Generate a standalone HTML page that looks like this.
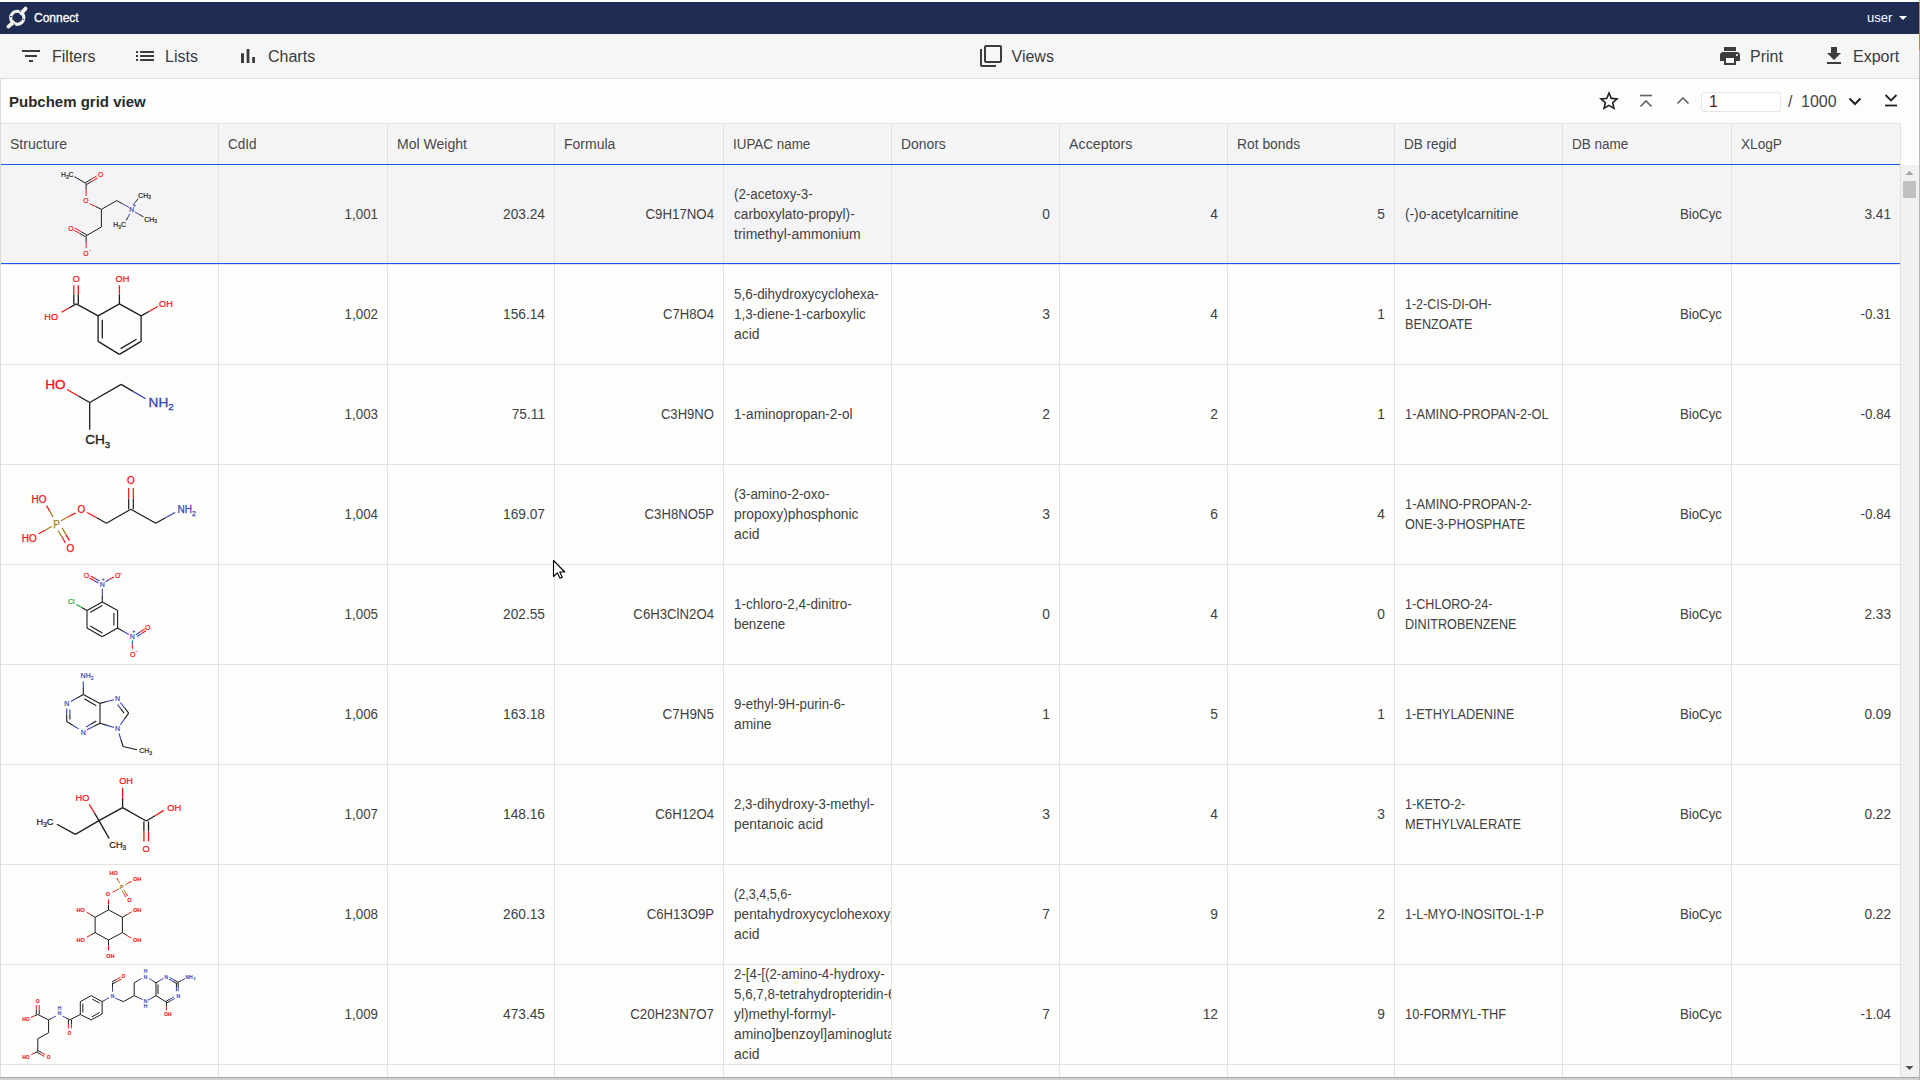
<!DOCTYPE html><html><head><meta charset="utf-8"><style>
*{box-sizing:border-box}
html,body{margin:0;padding:0;width:1920px;height:1080px;overflow:hidden;background:#fdfdfc;font-family:"Liberation Sans",sans-serif;color:#3d3d3d}
.a{position:absolute}
#nav{left:0;top:2px;width:1919px;height:32px;background:#202d53}
#tb{left:0;top:34px;width:1919px;height:45px;background:#f6f6f6;border-bottom:1px solid #dedede}
.tbt{font-size:16px;color:#3b3b3b;line-height:20px;top:47px}
#title{left:9px;top:92px;font-size:15px;font-weight:bold;color:#2b2b2b;line-height:20px}
#hdr{left:0;top:123px;width:1900px;height:42px;background:#f5f5f6;border-top:1px solid #e2e2e2}
.hc{font-size:14px;color:#474747;line-height:20px;top:134px}
.vl{width:1px;background:#e1e1e3}
.hl{height:1px;background:#e3e3e3}
.cell{font-size:14px;color:#414141;line-height:20px;white-space:nowrap;overflow:hidden}
.r{text-align:right}
</style></head><body>
<div class="a" id="nav"></div>
<svg class="a" style="left:0px;top:0px" width="34" height="34" viewBox="0 0 34 34"><circle cx="17.3" cy="17.8" r="6.6" fill="none" stroke="#f3f1ee" stroke-width="3.1"/><path d="M21.3 13.2 L25.6 8.6" stroke="#f3f1ee" stroke-width="3.8" stroke-linecap="round"/><path d="M13.2 22.4 L8.4 26.6" stroke="#f3f1ee" stroke-width="3.8" stroke-linecap="round"/><path d="M19.6 10.2 L20.6 12.0 M24.4 19.6 L22.4 19.0 M15.2 25.6 L14.0 23.6 M10.0 16.4 L12.2 16.8" stroke="#202d53" stroke-width="0.9"/></svg>
<div class="a" style="left:34px;top:11px;font-size:12px;color:#fff;line-height:14px;-webkit-text-stroke:0.3px #fff">Connect</div>
<div class="a" style="left:1867px;top:10px;font-size:13px;color:#fff;line-height:16px">user</div>
<svg class="a" style="left:1898px;top:15px" width="10" height="6"><path d="M1 1h8l-4 4z" fill="#fff"/></svg>
<div class="a" id="tb"></div>
<svg class="a" style="left:19px;top:44px" width="24" height="24" viewBox="0 0 24 24"><path d="M10 18h4v-2h-4v2zM3 6v2h18V6H3zm3 7h12v-2H6v2z" fill="#3c3c3c"/></svg>
<div class="a tbt" style="left:52px">Filters</div>
<svg class="a" style="left:133px;top:44px" width="24" height="24" viewBox="0 0 24 24"><path d="M3 13h2v-2H3v2zm0 4h2v-2H3v2zm0-8h2V7H3v2zm4 4h14v-2H7v2zm0 4h14v-2H7v2zM7 7v2h14V7H7z" fill="#3c3c3c"/></svg>
<div class="a tbt" style="left:165px">Lists</div>
<svg class="a" style="left:236px;top:44px" width="24" height="24" viewBox="0 0 24 24"><path d="M5 9.2h3V19H5zM10.6 5h2.8v14h-2.8zm5.6 8H19v6h-2.8z" fill="#3c3c3c"/></svg>
<div class="a tbt" style="left:268px">Charts</div>
<svg class="a" style="left:979px;top:44px" width="24" height="24" viewBox="0 0 24 24"><path d="M3 5H1v16c0 1.1.9 2 2 2h14v-2H3V5zm18-4H7c-1.1 0-2 .9-2 2v14c0 1.1.9 2 2 2h14c1.1 0 2-.9 2-2V3c0-1.1-.9-2-2-2zm0 16H7V3h14v14z" fill="#3c3c3c"/></svg>
<div class="a tbt" style="left:1011.5px">Views</div>
<svg class="a" style="left:1718px;top:44px" width="24" height="24" viewBox="0 0 24 24"><path d="M19 8H5c-1.66 0-3 1.34-3 3v6h4v4h12v-4h4v-6c0-1.66-1.34-3-3-3zm-3 11H8v-5h8v5zm3-7c-.55 0-1-.45-1-1s.45-1 1-1 1 .45 1 1-.45 1-1 1zm-1-9H6v4h12V3z" fill="#3c3c3c"/></svg>
<div class="a tbt" style="left:1750px">Print</div>
<svg class="a" style="left:1822px;top:44px" width="24" height="24" viewBox="0 0 24 24"><path d="M19 9h-4V3H9v6H5l7 7 7-7zM5 18v2h14v-2H5z" fill="#3c3c3c"/></svg>
<div class="a tbt" style="left:1853px">Export</div>
<div class="a" id="title">Pubchem grid view</div>
<svg class="a" style="left:1597px;top:89px" width="24" height="24" viewBox="0 0 24 24"><path d="M22 9.24l-7.19-.62L12 2 9.19 8.63 2 9.24l5.46 4.73L5.82 21 12 17.27 18.18 21l-1.63-7.03L22 9.24zM12 15.4l-3.76 2.27 1-4.28-3.32-2.88 4.38-.38L12 6.1l1.71 4.04 4.38.38-3.32 2.88 1 4.28L12 15.4z" fill="#222"/></svg>
<svg class="a" style="left:1638px;top:93px" width="16" height="16"><path d="M2 2.5h12" stroke="#666" stroke-width="1.7"/><path d="M2.5 13.5L8 8l5.5 5.5" stroke="#666" stroke-width="1.7" fill="none"/></svg>
<svg class="a" style="left:1675px;top:94px" width="16" height="14"><path d="M2.5 9.5L8 4l5.5 5.5" stroke="#666" stroke-width="1.7" fill="none"/></svg>
<div class="a" style="left:1701px;top:92px;width:80px;height:20px;border:1px solid #e6e6e6;border-radius:3px;background:#fff"></div>
<div class="a" style="left:1709px;top:92px;font-size:16px;line-height:20px;color:#5a1a1a">1</div>
<div class="a" style="left:1788px;top:92px;font-size:16px;line-height:20px;color:#444">/</div>
<div class="a" style="left:1801px;top:92px;font-size:16px;line-height:20px;color:#444">1000</div>
<svg class="a" style="left:1847px;top:94px" width="16" height="14"><path d="M2.5 4.5L8 10l5.5-5.5" stroke="#222" stroke-width="2" fill="none"/></svg>
<svg class="a" style="left:1883px;top:92px" width="16" height="16"><path d="M2 13.5h12" stroke="#222" stroke-width="1.8"/><path d="M2.5 3L8 8.5 13.5 3" stroke="#222" stroke-width="1.8" fill="none"/></svg>
<div class="a" id="hdr"></div>
<div class="a hc" style="left:10px;transform:scaleX(1.0031);transform-origin:left">Structure</div>
<div class="a hc" style="left:228px;transform:scaleX(0.9680);transform-origin:left">CdId</div>
<div class="a hc" style="left:397px;transform:scaleX(1.0036);transform-origin:left">Mol Weight</div>
<div class="a hc" style="left:564px;transform:scaleX(0.9997);transform-origin:left">Formula</div>
<div class="a hc" style="left:733px;transform:scaleX(0.9578);transform-origin:left">IUPAC name</div>
<div class="a hc" style="left:901px;transform:scaleX(0.9910);transform-origin:left">Donors</div>
<div class="a hc" style="left:1069px;transform:scaleX(1.0188);transform-origin:left">Acceptors</div>
<div class="a hc" style="left:1237px;transform:scaleX(0.9898);transform-origin:left">Rot bonds</div>
<div class="a hc" style="left:1404px;transform:scaleX(0.9648);transform-origin:left">DB regid</div>
<div class="a hc" style="left:1572px;transform:scaleX(0.9641);transform-origin:left">DB name</div>
<div class="a hc" style="left:1741px;transform:scaleX(0.9724);transform-origin:left">XLogP</div>
<div class="a" style="left:0;top:165px;width:1900px;height:98px;background:#f4f4f6"></div>
<div class="a vl" style="left:218px;top:124px;height:953px"></div>
<div class="a vl" style="left:387px;top:124px;height:953px"></div>
<div class="a vl" style="left:554px;top:124px;height:953px"></div>
<div class="a vl" style="left:723px;top:124px;height:953px"></div>
<div class="a vl" style="left:891px;top:124px;height:953px"></div>
<div class="a vl" style="left:1059px;top:124px;height:953px"></div>
<div class="a vl" style="left:1227px;top:124px;height:953px"></div>
<div class="a vl" style="left:1394px;top:124px;height:953px"></div>
<div class="a vl" style="left:1562px;top:124px;height:953px"></div>
<div class="a vl" style="left:1731px;top:124px;height:953px"></div>
<div class="a vl" style="left:1900px;top:124px;height:953px"></div>
<div class="a hl" style="left:0;top:264px;width:1900px"></div>
<div class="a hl" style="left:0;top:364px;width:1900px"></div>
<div class="a hl" style="left:0;top:464px;width:1900px"></div>
<div class="a hl" style="left:0;top:564px;width:1900px"></div>
<div class="a hl" style="left:0;top:664px;width:1900px"></div>
<div class="a hl" style="left:0;top:764px;width:1900px"></div>
<div class="a hl" style="left:0;top:864px;width:1900px"></div>
<div class="a hl" style="left:0;top:964px;width:1900px"></div>
<div class="a hl" style="left:0;top:1064px;width:1900px"></div>
<div class="a" style="left:0;top:164px;width:1900px;height:1px;background:#1a5ae6"></div>
<div class="a" style="left:0;top:263px;width:1900px;height:1px;background:#1a5ae6"></div>
<div class="a cell r" style="left:219px;top:204px;width:159px;height:20px"><div style="transform:scaleX(0.9526);transform-origin:right">1,001</div></div>
<div class="a cell r" style="left:388px;top:204px;width:157px;height:20px"><div style="transform:scaleX(0.9798);transform-origin:right">203.24</div></div>
<div class="a cell r" style="left:555px;top:204px;width:159px;height:20px"><div style="transform:scaleX(0.9457);transform-origin:right">C9H17NO4</div></div>
<div class="a cell" style="left:734px;top:184px;width:157px;height:60px"><div style="transform:scaleX(0.9533);transform-origin:left">(2-acetoxy-3-</div><div style="transform:scaleX(0.9755);transform-origin:left">carboxylato-propyl)-</div><div style="transform:scaleX(0.9989);transform-origin:left">trimethyl-ammonium</div></div>
<div class="a cell r" style="left:892px;top:204px;width:158px;height:20px"><div style="transform:scaleX(0.9853);transform-origin:right">0</div></div>
<div class="a cell r" style="left:1060px;top:204px;width:158px;height:20px"><div style="transform:scaleX(0.9853);transform-origin:right">4</div></div>
<div class="a cell r" style="left:1228px;top:204px;width:157px;height:20px"><div style="transform:scaleX(0.9853);transform-origin:right">5</div></div>
<div class="a cell" style="left:1405px;top:204px;width:157px;height:20px"><div style="transform:scaleX(0.9784);transform-origin:left">(-)o-acetylcarnitine</div></div>
<div class="a cell r" style="left:1563px;top:204px;width:159px;height:20px"><div style="transform:scaleX(0.9493);transform-origin:right">BioCyc</div></div>
<div class="a cell r" style="left:1732px;top:204px;width:159px;height:20px"><div style="transform:scaleX(0.9767);transform-origin:right">3.41</div></div>
<div class="a" style="left:0;top:165px;width:218px;height:99px;overflow:hidden"><svg width="218" height="99" style="position:absolute;left:0;top:0" font-family="Liberation Sans, sans-serif"><line x1="74.50" y1="11.60" x2="86.10" y2="18.50" stroke="#1c1c1c" stroke-width="1.0"/><line x1="86.66" y1="19.45" x2="92.21" y2="16.20" stroke="#1c1c1c" stroke-width="1.0"/><line x1="92.21" y1="16.20" x2="97.76" y2="12.95" stroke="#f21414" stroke-width="1.0"/><line x1="85.54" y1="17.55" x2="91.09" y2="14.30" stroke="#1c1c1c" stroke-width="1.0"/><line x1="91.09" y1="14.30" x2="96.64" y2="11.05" stroke="#f21414" stroke-width="1.0"/><line x1="86.10" y1="18.50" x2="86.10" y2="24.75" stroke="#1c1c1c" stroke-width="1.0"/><line x1="86.10" y1="24.75" x2="86.10" y2="31.00" stroke="#f21414" stroke-width="1.0"/><line x1="89.60" y1="38.60" x2="95.50" y2="41.50" stroke="#f21414" stroke-width="1.0"/><line x1="95.50" y1="41.50" x2="101.40" y2="44.40" stroke="#1c1c1c" stroke-width="1.0"/><line x1="101.40" y1="44.40" x2="116.70" y2="35.60" stroke="#1c1c1c" stroke-width="1.0"/><line x1="116.70" y1="35.60" x2="122.85" y2="39.00" stroke="#1c1c1c" stroke-width="1.0"/><line x1="122.85" y1="39.00" x2="129.00" y2="42.40" stroke="#3a44b0" stroke-width="1.0"/><line x1="133.00" y1="40.00" x2="135.60" y2="36.80" stroke="#3a44b0" stroke-width="1.0"/><line x1="135.60" y1="36.80" x2="138.20" y2="33.60" stroke="#1c1c1c" stroke-width="1.0"/><line x1="135.00" y1="47.00" x2="139.25" y2="49.45" stroke="#3a44b0" stroke-width="1.0"/><line x1="139.25" y1="49.45" x2="143.50" y2="51.90" stroke="#1c1c1c" stroke-width="1.0"/><line x1="129.80" y1="48.80" x2="128.00" y2="52.10" stroke="#3a44b0" stroke-width="1.0"/><line x1="128.00" y1="52.10" x2="126.20" y2="55.40" stroke="#1c1c1c" stroke-width="1.0"/><line x1="101.40" y1="44.40" x2="101.40" y2="62.00" stroke="#1c1c1c" stroke-width="1.0"/><line x1="101.40" y1="62.00" x2="86.10" y2="70.80" stroke="#1c1c1c" stroke-width="1.0"/><line x1="86.65" y1="69.84" x2="80.70" y2="66.44" stroke="#1c1c1c" stroke-width="1.0"/><line x1="80.70" y1="66.44" x2="74.75" y2="63.04" stroke="#f21414" stroke-width="1.0"/><line x1="85.55" y1="71.76" x2="79.60" y2="68.36" stroke="#1c1c1c" stroke-width="1.0"/><line x1="79.60" y1="68.36" x2="73.65" y2="64.96" stroke="#f21414" stroke-width="1.0"/><line x1="86.10" y1="70.80" x2="86.10" y2="76.90" stroke="#1c1c1c" stroke-width="1.0"/><line x1="86.10" y1="76.90" x2="86.10" y2="83.00" stroke="#f21414" stroke-width="1.0"/><text x="61.00" y="12.10" font-size="6.8" fill="#1c1c1c" stroke="#1c1c1c" stroke-width="0.20" text-anchor="start">H<tspan font-size="4.76" dy="1.70">3</tspan><tspan dy="-1.70">C</tspan></text><text x="100.60" y="12.00" font-size="6.8" fill="#f21414" stroke="#f21414" stroke-width="0.20" text-anchor="middle">O</text><text x="85.80" y="38.20" font-size="6.8" fill="#f21414" stroke="#f21414" stroke-width="0.20" text-anchor="middle">O</text><text x="131.60" y="47.20" font-size="6.8" fill="#3a44b0" stroke="#3a44b0" stroke-width="0.20" text-anchor="middle">N</text><text x="134.60" y="41.60" font-size="4.5" fill="#3a44b0" stroke="#3a44b0" stroke-width="0.20" text-anchor="middle">+</text><text x="138.30" y="32.60" font-size="6.8" fill="#1c1c1c" stroke="#1c1c1c" stroke-width="0.20" text-anchor="start">CH<tspan font-size="4.76" dy="1.70">3</tspan><tspan dy="-1.70"></tspan></text><text x="144.30" y="56.60" font-size="6.8" fill="#1c1c1c" stroke="#1c1c1c" stroke-width="0.20" text-anchor="start">CH<tspan font-size="4.76" dy="1.70">3</tspan><tspan dy="-1.70"></tspan></text><text x="113.30" y="62.20" font-size="6.8" fill="#1c1c1c" stroke="#1c1c1c" stroke-width="0.20" text-anchor="start">H<tspan font-size="4.76" dy="1.70">3</tspan><tspan dy="-1.70">C</tspan></text><text x="71.00" y="65.60" font-size="6.8" fill="#f21414" stroke="#f21414" stroke-width="0.20" text-anchor="middle">O</text><text x="86.00" y="91.00" font-size="6.8" fill="#f21414" stroke="#f21414" stroke-width="0.20" text-anchor="middle">O</text><text x="90.30" y="86.80" font-size="5" fill="#f21414" stroke="#f21414" stroke-width="0.20" text-anchor="middle">-</text></svg></div>
<div class="a cell r" style="left:219px;top:304px;width:159px;height:20px"><div style="transform:scaleX(0.9526);transform-origin:right">1,002</div></div>
<div class="a cell r" style="left:388px;top:304px;width:157px;height:20px"><div style="transform:scaleX(0.9798);transform-origin:right">156.14</div></div>
<div class="a cell r" style="left:555px;top:304px;width:159px;height:20px"><div style="transform:scaleX(0.9368);transform-origin:right">C7H8O4</div></div>
<div class="a cell" style="left:734px;top:284px;width:157px;height:60px"><div style="transform:scaleX(0.9586);transform-origin:left">5,6-dihydroxycyclohexa-</div><div style="transform:scaleX(0.9563);transform-origin:left">1,3-diene-1-carboxylic</div><div style="transform:scaleX(0.9963);transform-origin:left">acid</div></div>
<div class="a cell r" style="left:892px;top:304px;width:158px;height:20px"><div style="transform:scaleX(0.9853);transform-origin:right">3</div></div>
<div class="a cell r" style="left:1060px;top:304px;width:158px;height:20px"><div style="transform:scaleX(0.9853);transform-origin:right">4</div></div>
<div class="a cell r" style="left:1228px;top:304px;width:157px;height:20px"><div style="transform:scaleX(0.9853);transform-origin:right">1</div></div>
<div class="a cell" style="left:1405px;top:294px;width:157px;height:40px"><div style="transform:scaleX(0.8918);transform-origin:left">1-2-CIS-DI-OH-</div><div style="transform:scaleX(0.9062);transform-origin:left">BENZOATE</div></div>
<div class="a cell r" style="left:1563px;top:304px;width:159px;height:20px"><div style="transform:scaleX(0.9493);transform-origin:right">BioCyc</div></div>
<div class="a cell r" style="left:1732px;top:304px;width:159px;height:20px"><div style="transform:scaleX(0.9522);transform-origin:right">-0.31</div></div>
<div class="a" style="left:0;top:265px;width:218px;height:99px;overflow:hidden"><svg width="218" height="99" style="position:absolute;left:0;top:0" font-family="Liberation Sans, sans-serif"><line x1="98.10" y1="50.90" x2="119.40" y2="38.90" stroke="#1c1c1c" stroke-width="1.3"/><line x1="119.40" y1="38.90" x2="141.10" y2="50.90" stroke="#1c1c1c" stroke-width="1.3"/><line x1="141.10" y1="50.90" x2="141.10" y2="76.40" stroke="#1c1c1c" stroke-width="1.3"/><line x1="141.10" y1="76.40" x2="119.40" y2="89.40" stroke="#1c1c1c" stroke-width="1.3"/><line x1="119.40" y1="89.40" x2="98.10" y2="76.40" stroke="#1c1c1c" stroke-width="1.3"/><line x1="98.10" y1="76.40" x2="98.10" y2="50.90" stroke="#1c1c1c" stroke-width="1.3"/><line x1="102.30" y1="54.80" x2="102.30" y2="73.40" stroke="#1c1c1c" stroke-width="1.3"/><line x1="120.60" y1="83.60" x2="136.60" y2="74.20" stroke="#1c1c1c" stroke-width="1.3"/><line x1="98.10" y1="50.90" x2="76.30" y2="38.90" stroke="#1c1c1c" stroke-width="1.3"/><line x1="73.80" y1="38.90" x2="73.80" y2="29.60" stroke="#1c1c1c" stroke-width="1.3"/><line x1="73.80" y1="29.60" x2="73.80" y2="20.30" stroke="#f21414" stroke-width="1.3"/><line x1="78.30" y1="38.90" x2="78.30" y2="29.60" stroke="#1c1c1c" stroke-width="1.3"/><line x1="78.30" y1="29.60" x2="78.30" y2="20.30" stroke="#f21414" stroke-width="1.3"/><line x1="76.30" y1="38.90" x2="68.90" y2="43.05" stroke="#1c1c1c" stroke-width="1.3"/><line x1="68.90" y1="43.05" x2="61.50" y2="47.20" stroke="#f21414" stroke-width="1.3"/><line x1="119.40" y1="38.90" x2="119.40" y2="29.60" stroke="#1c1c1c" stroke-width="1.3"/><line x1="119.40" y1="29.60" x2="119.40" y2="20.30" stroke="#f21414" stroke-width="1.3"/><line x1="141.10" y1="50.90" x2="149.45" y2="46.20" stroke="#1c1c1c" stroke-width="1.3"/><line x1="149.45" y1="46.20" x2="157.80" y2="41.50" stroke="#f21414" stroke-width="1.3"/><text x="76.30" y="16.80" font-size="9.2" fill="#f21414" stroke="#f21414" stroke-width="0.23" text-anchor="middle">O</text><text x="44.30" y="55.00" font-size="9.2" fill="#f21414" stroke="#f21414" stroke-width="0.23" text-anchor="start">HO</text><text x="115.60" y="16.80" font-size="9.2" fill="#f21414" stroke="#f21414" stroke-width="0.23" text-anchor="start">OH</text><text x="159.00" y="41.90" font-size="9.2" fill="#f21414" stroke="#f21414" stroke-width="0.23" text-anchor="start">OH</text></svg></div>
<div class="a cell r" style="left:219px;top:404px;width:159px;height:20px"><div style="transform:scaleX(0.9526);transform-origin:right">1,003</div></div>
<div class="a cell r" style="left:388px;top:404px;width:157px;height:20px"><div style="transform:scaleX(0.9786);transform-origin:right">75.11</div></div>
<div class="a cell r" style="left:555px;top:404px;width:159px;height:20px"><div style="transform:scaleX(0.9349);transform-origin:right">C3H9NO</div></div>
<div class="a cell" style="left:734px;top:404px;width:157px;height:20px"><div style="transform:scaleX(0.9699);transform-origin:left">1-aminopropan-2-ol</div></div>
<div class="a cell r" style="left:892px;top:404px;width:158px;height:20px"><div style="transform:scaleX(0.9853);transform-origin:right">2</div></div>
<div class="a cell r" style="left:1060px;top:404px;width:158px;height:20px"><div style="transform:scaleX(0.9853);transform-origin:right">2</div></div>
<div class="a cell r" style="left:1228px;top:404px;width:157px;height:20px"><div style="transform:scaleX(0.9853);transform-origin:right">1</div></div>
<div class="a cell" style="left:1405px;top:404px;width:157px;height:20px"><div style="transform:scaleX(0.9151);transform-origin:left">1-AMINO-PROPAN-2-OL</div></div>
<div class="a cell r" style="left:1563px;top:404px;width:159px;height:20px"><div style="transform:scaleX(0.9493);transform-origin:right">BioCyc</div></div>
<div class="a cell r" style="left:1732px;top:404px;width:159px;height:20px"><div style="transform:scaleX(0.9522);transform-origin:right">-0.84</div></div>
<div class="a" style="left:0;top:365px;width:218px;height:99px;overflow:hidden"><svg width="218" height="99" style="position:absolute;left:0;top:0" font-family="Liberation Sans, sans-serif"><line x1="67.00" y1="24.50" x2="78.35" y2="31.00" stroke="#f21414" stroke-width="1.3"/><line x1="78.35" y1="31.00" x2="89.70" y2="37.50" stroke="#1c1c1c" stroke-width="1.3"/><line x1="89.70" y1="37.50" x2="121.20" y2="19.40" stroke="#1c1c1c" stroke-width="1.3"/><line x1="121.20" y1="19.40" x2="133.45" y2="26.60" stroke="#1c1c1c" stroke-width="1.3"/><line x1="133.45" y1="26.60" x2="145.70" y2="33.80" stroke="#3a44b0" stroke-width="1.3"/><line x1="89.70" y1="37.50" x2="89.70" y2="64.80" stroke="#1c1c1c" stroke-width="1.3"/><text x="45.30" y="24.30" font-size="13.6" fill="#f21414" stroke="#f21414" stroke-width="0.34" text-anchor="start">HO</text><text x="148.60" y="41.80" font-size="13.6" fill="#3a44b0" stroke="#3a44b0" stroke-width="0.34" text-anchor="start">NH<tspan font-size="9.52" dy="3.40">2</tspan><tspan dy="-3.40"></tspan></text><text x="85.20" y="79.30" font-size="13.6" fill="#1c1c1c" stroke="#1c1c1c" stroke-width="0.34" text-anchor="start">CH<tspan font-size="9.52" dy="3.40">3</tspan><tspan dy="-3.40"></tspan></text></svg></div>
<div class="a cell r" style="left:219px;top:504px;width:159px;height:20px"><div style="transform:scaleX(0.9526);transform-origin:right">1,004</div></div>
<div class="a cell r" style="left:388px;top:504px;width:157px;height:20px"><div style="transform:scaleX(0.9798);transform-origin:right">169.07</div></div>
<div class="a cell r" style="left:555px;top:504px;width:159px;height:20px"><div style="transform:scaleX(0.9386);transform-origin:right">C3H8NO5P</div></div>
<div class="a cell" style="left:734px;top:484px;width:157px;height:60px"><div style="transform:scaleX(0.9588);transform-origin:left">(3-amino-2-oxo-</div><div style="transform:scaleX(0.9874);transform-origin:left">propoxy)phosphonic</div><div style="transform:scaleX(0.9963);transform-origin:left">acid</div></div>
<div class="a cell r" style="left:892px;top:504px;width:158px;height:20px"><div style="transform:scaleX(0.9853);transform-origin:right">3</div></div>
<div class="a cell r" style="left:1060px;top:504px;width:158px;height:20px"><div style="transform:scaleX(0.9853);transform-origin:right">6</div></div>
<div class="a cell r" style="left:1228px;top:504px;width:157px;height:20px"><div style="transform:scaleX(0.9853);transform-origin:right">4</div></div>
<div class="a cell" style="left:1405px;top:494px;width:157px;height:40px"><div style="transform:scaleX(0.9176);transform-origin:left">1-AMINO-PROPAN-2-</div><div style="transform:scaleX(0.9051);transform-origin:left">ONE-3-PHOSPHATE</div></div>
<div class="a cell r" style="left:1563px;top:504px;width:159px;height:20px"><div style="transform:scaleX(0.9493);transform-origin:right">BioCyc</div></div>
<div class="a cell r" style="left:1732px;top:504px;width:159px;height:20px"><div style="transform:scaleX(0.9522);transform-origin:right">-0.84</div></div>
<div class="a" style="left:0;top:465px;width:218px;height:99px;overflow:hidden"><svg width="218" height="99" style="position:absolute;left:0;top:0" font-family="Liberation Sans, sans-serif"><line x1="53.20" y1="52.10" x2="49.85" y2="46.35" stroke="#a8781c" stroke-width="1.2"/><line x1="49.85" y1="46.35" x2="46.50" y2="40.60" stroke="#f21414" stroke-width="1.2"/><line x1="51.70" y1="61.50" x2="45.15" y2="65.15" stroke="#a8781c" stroke-width="1.2"/><line x1="45.15" y1="65.15" x2="38.60" y2="68.80" stroke="#f21414" stroke-width="1.2"/><line x1="58.21" y1="65.46" x2="61.86" y2="71.71" stroke="#a8781c" stroke-width="1.2"/><line x1="61.86" y1="71.71" x2="65.51" y2="77.96" stroke="#f21414" stroke-width="1.2"/><line x1="62.19" y1="63.14" x2="65.84" y2="69.39" stroke="#a8781c" stroke-width="1.2"/><line x1="65.84" y1="69.39" x2="69.49" y2="75.64" stroke="#f21414" stroke-width="1.2"/><line x1="61.00" y1="55.70" x2="68.30" y2="51.80" stroke="#a8781c" stroke-width="1.2"/><line x1="68.30" y1="51.80" x2="75.60" y2="47.90" stroke="#f21414" stroke-width="1.2"/><line x1="87.10" y1="47.40" x2="96.75" y2="52.85" stroke="#f21414" stroke-width="1.2"/><line x1="96.75" y1="52.85" x2="106.40" y2="58.30" stroke="#1c1c1c" stroke-width="1.2"/><line x1="106.40" y1="58.30" x2="130.80" y2="44.30" stroke="#1c1c1c" stroke-width="1.2"/><line x1="128.70" y1="44.30" x2="128.70" y2="33.60" stroke="#1c1c1c" stroke-width="1.2"/><line x1="128.70" y1="33.60" x2="128.70" y2="22.90" stroke="#f21414" stroke-width="1.2"/><line x1="133.30" y1="44.30" x2="133.30" y2="33.60" stroke="#1c1c1c" stroke-width="1.2"/><line x1="133.30" y1="33.60" x2="133.30" y2="22.90" stroke="#f21414" stroke-width="1.2"/><line x1="130.80" y1="44.30" x2="155.80" y2="58.30" stroke="#1c1c1c" stroke-width="1.2"/><line x1="155.80" y1="58.30" x2="165.45" y2="52.85" stroke="#1c1c1c" stroke-width="1.2"/><line x1="165.45" y1="52.85" x2="175.10" y2="47.40" stroke="#3a44b0" stroke-width="1.2"/><text x="53.20" y="62.60" font-size="10.0" fill="#a8781c" stroke="#a8781c" stroke-width="0.25" text-anchor="start">P</text><text x="31.60" y="37.60" font-size="10.0" fill="#f21414" stroke="#f21414" stroke-width="0.25" text-anchor="start">HO</text><text x="21.80" y="77.20" font-size="10.0" fill="#f21414" stroke="#f21414" stroke-width="0.25" text-anchor="start">HO</text><text x="70.40" y="87.00" font-size="10.0" fill="#f21414" stroke="#f21414" stroke-width="0.25" text-anchor="middle">O</text><text x="81.40" y="48.00" font-size="10.0" fill="#f21414" stroke="#f21414" stroke-width="0.25" text-anchor="middle">O</text><text x="130.80" y="18.80" font-size="10.0" fill="#f21414" stroke="#f21414" stroke-width="0.25" text-anchor="middle">O</text><text x="177.50" y="48.00" font-size="10.0" fill="#3a44b0" stroke="#3a44b0" stroke-width="0.25" text-anchor="start">NH<tspan font-size="7.00" dy="2.50">2</tspan><tspan dy="-2.50"></tspan></text></svg></div>
<div class="a cell r" style="left:219px;top:604px;width:159px;height:20px"><div style="transform:scaleX(0.9526);transform-origin:right">1,005</div></div>
<div class="a cell r" style="left:388px;top:604px;width:157px;height:20px"><div style="transform:scaleX(0.9798);transform-origin:right">202.55</div></div>
<div class="a cell r" style="left:555px;top:604px;width:159px;height:20px"><div style="transform:scaleX(0.9422);transform-origin:right">C6H3ClN2O4</div></div>
<div class="a cell" style="left:734px;top:594px;width:157px;height:40px"><div style="transform:scaleX(0.9637);transform-origin:left">1-chloro-2,4-dinitro-</div><div style="transform:scaleX(0.9537);transform-origin:left">benzene</div></div>
<div class="a cell r" style="left:892px;top:604px;width:158px;height:20px"><div style="transform:scaleX(0.9853);transform-origin:right">0</div></div>
<div class="a cell r" style="left:1060px;top:604px;width:158px;height:20px"><div style="transform:scaleX(0.9853);transform-origin:right">4</div></div>
<div class="a cell r" style="left:1228px;top:604px;width:157px;height:20px"><div style="transform:scaleX(0.9853);transform-origin:right">0</div></div>
<div class="a cell" style="left:1405px;top:594px;width:157px;height:40px"><div style="transform:scaleX(0.8998);transform-origin:left">1-CHLORO-24-</div><div style="transform:scaleX(0.9015);transform-origin:left">DINITROBENZENE</div></div>
<div class="a cell r" style="left:1563px;top:604px;width:159px;height:20px"><div style="transform:scaleX(0.9493);transform-origin:right">BioCyc</div></div>
<div class="a cell r" style="left:1732px;top:604px;width:159px;height:20px"><div style="transform:scaleX(0.9767);transform-origin:right">2.33</div></div>
<div class="a" style="left:0;top:565px;width:218px;height:99px;overflow:hidden"><svg width="218" height="99" style="position:absolute;left:0;top:0" font-family="Liberation Sans, sans-serif"><line x1="102.30" y1="37.00" x2="117.60" y2="45.40" stroke="#1c1c1c" stroke-width="1.1"/><line x1="117.60" y1="45.40" x2="117.60" y2="63.00" stroke="#1c1c1c" stroke-width="1.1"/><line x1="117.60" y1="63.00" x2="102.30" y2="71.80" stroke="#1c1c1c" stroke-width="1.1"/><line x1="102.30" y1="71.80" x2="87.00" y2="63.00" stroke="#1c1c1c" stroke-width="1.1"/><line x1="87.00" y1="63.00" x2="87.00" y2="45.40" stroke="#1c1c1c" stroke-width="1.1"/><line x1="87.00" y1="45.40" x2="102.30" y2="37.00" stroke="#1c1c1c" stroke-width="1.1"/><line x1="90.30" y1="47.20" x2="102.30" y2="40.40" stroke="#1c1c1c" stroke-width="1.1"/><line x1="113.90" y1="48.00" x2="113.90" y2="60.40" stroke="#1c1c1c" stroke-width="1.1"/><line x1="90.30" y1="61.10" x2="102.30" y2="68.00" stroke="#1c1c1c" stroke-width="1.1"/><line x1="87.00" y1="45.40" x2="81.70" y2="42.40" stroke="#1c1c1c" stroke-width="1.1"/><line x1="81.70" y1="42.40" x2="76.40" y2="39.40" stroke="#22a022" stroke-width="1.1"/><line x1="102.30" y1="37.00" x2="102.30" y2="30.40" stroke="#1c1c1c" stroke-width="1.1"/><line x1="102.30" y1="30.40" x2="102.30" y2="23.80" stroke="#3a44b0" stroke-width="1.1"/><line x1="99.53" y1="16.04" x2="95.03" y2="13.54" stroke="#3a44b0" stroke-width="1.1"/><line x1="95.03" y1="13.54" x2="90.53" y2="11.04" stroke="#f21414" stroke-width="1.1"/><line x1="98.47" y1="17.96" x2="93.97" y2="15.46" stroke="#3a44b0" stroke-width="1.1"/><line x1="93.97" y1="15.46" x2="89.47" y2="12.96" stroke="#f21414" stroke-width="1.1"/><line x1="105.60" y1="16.70" x2="109.75" y2="14.35" stroke="#3a44b0" stroke-width="1.1"/><line x1="109.75" y1="14.35" x2="113.90" y2="12.00" stroke="#f21414" stroke-width="1.1"/><line x1="117.60" y1="63.00" x2="123.15" y2="66.20" stroke="#1c1c1c" stroke-width="1.1"/><line x1="123.15" y1="66.20" x2="128.70" y2="69.40" stroke="#3a44b0" stroke-width="1.1"/><line x1="137.21" y1="71.52" x2="141.61" y2="68.62" stroke="#3a44b0" stroke-width="1.1"/><line x1="141.61" y1="68.62" x2="146.01" y2="65.72" stroke="#f21414" stroke-width="1.1"/><line x1="135.99" y1="69.68" x2="140.39" y2="66.78" stroke="#3a44b0" stroke-width="1.1"/><line x1="140.39" y1="66.78" x2="144.79" y2="63.88" stroke="#f21414" stroke-width="1.1"/><line x1="132.40" y1="75.60" x2="132.40" y2="79.70" stroke="#3a44b0" stroke-width="1.1"/><line x1="132.40" y1="79.70" x2="132.40" y2="83.80" stroke="#f21414" stroke-width="1.1"/><text x="68.00" y="39.40" font-size="7.0" fill="#22a022" stroke="#22a022" stroke-width="0.20" text-anchor="start">Cl</text><text x="102.30" y="21.60" font-size="7.0" fill="#3a44b0" stroke="#3a44b0" stroke-width="0.20" text-anchor="middle">N</text><text x="103.40" y="15.60" font-size="4.6" fill="#3a44b0" stroke="#3a44b0" stroke-width="0.20" text-anchor="middle">+</text><text x="86.60" y="13.20" font-size="7.0" fill="#f21414" stroke="#f21414" stroke-width="0.20" text-anchor="middle">O</text><text x="117.80" y="13.20" font-size="7.0" fill="#f21414" stroke="#f21414" stroke-width="0.20" text-anchor="middle">O</text><text x="121.40" y="9.60" font-size="5" fill="#f21414" stroke="#f21414" stroke-width="0.20" text-anchor="middle">-</text><text x="132.30" y="73.90" font-size="7.0" fill="#3a44b0" stroke="#3a44b0" stroke-width="0.20" text-anchor="middle">N</text><text x="133.80" y="67.90" font-size="4.6" fill="#3a44b0" stroke="#3a44b0" stroke-width="0.20" text-anchor="middle">+</text><text x="147.80" y="65.00" font-size="7.0" fill="#f21414" stroke="#f21414" stroke-width="0.20" text-anchor="middle">O</text><text x="132.80" y="92.00" font-size="7.0" fill="#f21414" stroke="#f21414" stroke-width="0.20" text-anchor="middle">O</text><text x="136.60" y="88.40" font-size="5" fill="#f21414" stroke="#f21414" stroke-width="0.20" text-anchor="middle">-</text></svg></div>
<div class="a cell r" style="left:219px;top:704px;width:159px;height:20px"><div style="transform:scaleX(0.9526);transform-origin:right">1,006</div></div>
<div class="a cell r" style="left:388px;top:704px;width:157px;height:20px"><div style="transform:scaleX(0.9798);transform-origin:right">163.18</div></div>
<div class="a cell r" style="left:555px;top:704px;width:159px;height:20px"><div style="transform:scaleX(0.9569);transform-origin:right">C7H9N5</div></div>
<div class="a cell" style="left:734px;top:694px;width:157px;height:40px"><div style="transform:scaleX(0.9473);transform-origin:left">9-ethyl-9H-purin-6-</div><div style="transform:scaleX(0.9832);transform-origin:left">amine</div></div>
<div class="a cell r" style="left:892px;top:704px;width:158px;height:20px"><div style="transform:scaleX(0.9853);transform-origin:right">1</div></div>
<div class="a cell r" style="left:1060px;top:704px;width:158px;height:20px"><div style="transform:scaleX(0.9853);transform-origin:right">5</div></div>
<div class="a cell r" style="left:1228px;top:704px;width:157px;height:20px"><div style="transform:scaleX(0.9853);transform-origin:right">1</div></div>
<div class="a cell" style="left:1405px;top:704px;width:157px;height:20px"><div style="transform:scaleX(0.9115);transform-origin:left">1-ETHYLADENINE</div></div>
<div class="a cell r" style="left:1563px;top:704px;width:159px;height:20px"><div style="transform:scaleX(0.9493);transform-origin:right">BioCyc</div></div>
<div class="a cell r" style="left:1732px;top:704px;width:159px;height:20px"><div style="transform:scaleX(0.9767);transform-origin:right">0.09</div></div>
<div class="a" style="left:0;top:665px;width:218px;height:99px;overflow:hidden"><svg width="218" height="99" style="position:absolute;left:0;top:0" font-family="Liberation Sans, sans-serif"><line x1="83.30" y1="29.60" x2="83.30" y2="22.90" stroke="#1c1c1c" stroke-width="1.1"/><line x1="83.30" y1="22.90" x2="83.30" y2="16.20" stroke="#3a44b0" stroke-width="1.1"/><line x1="83.30" y1="29.60" x2="77.05" y2="33.10" stroke="#1c1c1c" stroke-width="1.1"/><line x1="77.05" y1="33.10" x2="70.80" y2="36.60" stroke="#3a44b0" stroke-width="1.1"/><line x1="66.70" y1="43.50" x2="66.70" y2="50.00" stroke="#3a44b0" stroke-width="1.1"/><line x1="66.70" y1="50.00" x2="66.70" y2="56.50" stroke="#1c1c1c" stroke-width="1.1"/><line x1="69.90" y1="44.40" x2="69.90" y2="49.50" stroke="#3a44b0" stroke-width="1.1"/><line x1="69.90" y1="49.50" x2="69.90" y2="54.60" stroke="#1c1c1c" stroke-width="1.1"/><line x1="66.70" y1="56.50" x2="72.70" y2="60.20" stroke="#1c1c1c" stroke-width="1.1"/><line x1="72.70" y1="60.20" x2="78.70" y2="63.90" stroke="#3a44b0" stroke-width="1.1"/><line x1="87.00" y1="64.80" x2="93.50" y2="61.55" stroke="#3a44b0" stroke-width="1.1"/><line x1="93.50" y1="61.55" x2="100.00" y2="58.30" stroke="#1c1c1c" stroke-width="1.1"/><line x1="86.10" y1="62.00" x2="91.20" y2="59.00" stroke="#3a44b0" stroke-width="1.1"/><line x1="91.20" y1="59.00" x2="96.30" y2="56.00" stroke="#1c1c1c" stroke-width="1.1"/><line x1="100.00" y1="58.30" x2="100.00" y2="38.40" stroke="#1c1c1c" stroke-width="1.1"/><line x1="100.00" y1="38.40" x2="83.30" y2="29.60" stroke="#1c1c1c" stroke-width="1.1"/><line x1="96.30" y1="40.70" x2="84.30" y2="33.80" stroke="#1c1c1c" stroke-width="1.1"/><line x1="100.00" y1="38.40" x2="106.95" y2="36.55" stroke="#1c1c1c" stroke-width="1.1"/><line x1="106.95" y1="36.55" x2="113.90" y2="34.70" stroke="#3a44b0" stroke-width="1.1"/><line x1="120.40" y1="37.50" x2="124.55" y2="42.80" stroke="#3a44b0" stroke-width="1.1"/><line x1="124.55" y1="42.80" x2="128.70" y2="48.10" stroke="#1c1c1c" stroke-width="1.1"/><line x1="117.60" y1="39.60" x2="120.80" y2="43.85" stroke="#3a44b0" stroke-width="1.1"/><line x1="120.80" y1="43.85" x2="124.00" y2="48.10" stroke="#1c1c1c" stroke-width="1.1"/><line x1="128.70" y1="48.10" x2="124.55" y2="53.90" stroke="#1c1c1c" stroke-width="1.1"/><line x1="124.55" y1="53.90" x2="120.40" y2="59.70" stroke="#3a44b0" stroke-width="1.1"/><line x1="100.00" y1="58.30" x2="106.95" y2="60.40" stroke="#1c1c1c" stroke-width="1.1"/><line x1="106.95" y1="60.40" x2="113.90" y2="62.50" stroke="#3a44b0" stroke-width="1.1"/><line x1="119.00" y1="68.50" x2="121.05" y2="75.00" stroke="#3a44b0" stroke-width="1.1"/><line x1="121.05" y1="75.00" x2="123.10" y2="81.50" stroke="#1c1c1c" stroke-width="1.1"/><line x1="123.10" y1="81.50" x2="137.00" y2="84.70" stroke="#1c1c1c" stroke-width="1.1"/><text x="80.60" y="13.20" font-size="7.0" fill="#3a44b0" stroke="#3a44b0" stroke-width="0.20" text-anchor="start">NH<tspan font-size="4.90" dy="1.75">2</tspan><tspan dy="-1.75"></tspan></text><text x="66.70" y="41.00" font-size="7.0" fill="#3a44b0" stroke="#3a44b0" stroke-width="0.20" text-anchor="middle">N</text><text x="83.30" y="70.20" font-size="7.0" fill="#3a44b0" stroke="#3a44b0" stroke-width="0.20" text-anchor="middle">N</text><text x="117.60" y="36.40" font-size="7.0" fill="#3a44b0" stroke="#3a44b0" stroke-width="0.20" text-anchor="middle">N</text><text x="117.60" y="66.00" font-size="7.0" fill="#3a44b0" stroke="#3a44b0" stroke-width="0.20" text-anchor="middle">N</text><text x="139.20" y="88.20" font-size="7.0" fill="#1c1c1c" stroke="#1c1c1c" stroke-width="0.20" text-anchor="start">CH<tspan font-size="4.90" dy="1.75">3</tspan><tspan dy="-1.75"></tspan></text></svg></div>
<div class="a cell r" style="left:219px;top:804px;width:159px;height:20px"><div style="transform:scaleX(0.9526);transform-origin:right">1,007</div></div>
<div class="a cell r" style="left:388px;top:804px;width:157px;height:20px"><div style="transform:scaleX(0.9798);transform-origin:right">148.16</div></div>
<div class="a cell r" style="left:555px;top:804px;width:159px;height:20px"><div style="transform:scaleX(0.9429);transform-origin:right">C6H12O4</div></div>
<div class="a cell" style="left:734px;top:794px;width:157px;height:40px"><div style="transform:scaleX(0.9527);transform-origin:left">2,3-dihydroxy-3-methyl-</div><div style="transform:scaleX(0.9867);transform-origin:left">pentanoic acid</div></div>
<div class="a cell r" style="left:892px;top:804px;width:158px;height:20px"><div style="transform:scaleX(0.9853);transform-origin:right">3</div></div>
<div class="a cell r" style="left:1060px;top:804px;width:158px;height:20px"><div style="transform:scaleX(0.9853);transform-origin:right">4</div></div>
<div class="a cell r" style="left:1228px;top:804px;width:157px;height:20px"><div style="transform:scaleX(0.9853);transform-origin:right">3</div></div>
<div class="a cell" style="left:1405px;top:794px;width:157px;height:40px"><div style="transform:scaleX(0.8942);transform-origin:left">1-KETO-2-</div><div style="transform:scaleX(0.9162);transform-origin:left">METHYLVALERATE</div></div>
<div class="a cell r" style="left:1563px;top:804px;width:159px;height:20px"><div style="transform:scaleX(0.9493);transform-origin:right">BioCyc</div></div>
<div class="a cell r" style="left:1732px;top:804px;width:159px;height:20px"><div style="transform:scaleX(0.9767);transform-origin:right">0.22</div></div>
<div class="a" style="left:0;top:765px;width:218px;height:99px;overflow:hidden"><svg width="218" height="99" style="position:absolute;left:0;top:0" font-family="Liberation Sans, sans-serif"><line x1="56.90" y1="59.30" x2="75.40" y2="69.40" stroke="#1c1c1c" stroke-width="1.3"/><line x1="75.40" y1="69.40" x2="99.00" y2="55.60" stroke="#1c1c1c" stroke-width="1.3"/><line x1="99.00" y1="55.60" x2="94.15" y2="47.50" stroke="#1c1c1c" stroke-width="1.3"/><line x1="94.15" y1="47.50" x2="89.30" y2="39.40" stroke="#f21414" stroke-width="1.3"/><line x1="99.00" y1="55.60" x2="109.20" y2="73.60" stroke="#1c1c1c" stroke-width="1.3"/><line x1="99.00" y1="55.60" x2="122.60" y2="42.60" stroke="#1c1c1c" stroke-width="1.3"/><line x1="122.60" y1="42.60" x2="122.60" y2="32.65" stroke="#1c1c1c" stroke-width="1.3"/><line x1="122.60" y1="32.65" x2="122.60" y2="22.70" stroke="#f21414" stroke-width="1.3"/><line x1="122.60" y1="42.60" x2="146.20" y2="56.00" stroke="#1c1c1c" stroke-width="1.3"/><line x1="146.20" y1="56.00" x2="155.00" y2="50.70" stroke="#1c1c1c" stroke-width="1.3"/><line x1="155.00" y1="50.70" x2="163.80" y2="45.40" stroke="#f21414" stroke-width="1.3"/><line x1="143.90" y1="56.50" x2="143.90" y2="66.45" stroke="#1c1c1c" stroke-width="1.3"/><line x1="143.90" y1="66.45" x2="143.90" y2="76.40" stroke="#f21414" stroke-width="1.3"/><line x1="148.50" y1="56.50" x2="148.50" y2="66.45" stroke="#1c1c1c" stroke-width="1.3"/><line x1="148.50" y1="66.45" x2="148.50" y2="76.40" stroke="#f21414" stroke-width="1.3"/><text x="36.60" y="59.70" font-size="9.2" fill="#1c1c1c" stroke="#1c1c1c" stroke-width="0.23" text-anchor="start">H<tspan font-size="6.44" dy="2.30">3</tspan><tspan dy="-2.30">C</tspan></text><text x="75.60" y="36.10" font-size="9.2" fill="#f21414" stroke="#f21414" stroke-width="0.23" text-anchor="start">HO</text><text x="109.30" y="82.90" font-size="9.2" fill="#1c1c1c" stroke="#1c1c1c" stroke-width="0.23" text-anchor="start">CH<tspan font-size="6.44" dy="2.30">3</tspan><tspan dy="-2.30"></tspan></text><text x="119.20" y="19.00" font-size="9.2" fill="#f21414" stroke="#f21414" stroke-width="0.23" text-anchor="start">OH</text><text x="167.30" y="45.80" font-size="9.2" fill="#f21414" stroke="#f21414" stroke-width="0.23" text-anchor="start">OH</text><text x="146.00" y="86.60" font-size="9.2" fill="#f21414" stroke="#f21414" stroke-width="0.23" text-anchor="middle">O</text></svg></div>
<div class="a cell r" style="left:219px;top:904px;width:159px;height:20px"><div style="transform:scaleX(0.9526);transform-origin:right">1,008</div></div>
<div class="a cell r" style="left:388px;top:904px;width:157px;height:20px"><div style="transform:scaleX(0.9798);transform-origin:right">260.13</div></div>
<div class="a cell r" style="left:555px;top:904px;width:159px;height:20px"><div style="transform:scaleX(0.9402);transform-origin:right">C6H13O9P</div></div>
<div class="a cell" style="left:734px;top:884px;width:157px;height:60px"><div style="transform:scaleX(0.9018);transform-origin:left">(2,3,4,5,6-</div><div style="transform:scaleX(0.9747);transform-origin:left">pentahydroxycyclohexoxy)</div><div style="transform:scaleX(0.9963);transform-origin:left">acid</div></div>
<div class="a cell r" style="left:892px;top:904px;width:158px;height:20px"><div style="transform:scaleX(0.9853);transform-origin:right">7</div></div>
<div class="a cell r" style="left:1060px;top:904px;width:158px;height:20px"><div style="transform:scaleX(0.9853);transform-origin:right">9</div></div>
<div class="a cell r" style="left:1228px;top:904px;width:157px;height:20px"><div style="transform:scaleX(0.9853);transform-origin:right">2</div></div>
<div class="a cell" style="left:1405px;top:904px;width:157px;height:20px"><div style="transform:scaleX(0.9085);transform-origin:left">1-L-MYO-INOSITOL-1-P</div></div>
<div class="a cell r" style="left:1563px;top:904px;width:159px;height:20px"><div style="transform:scaleX(0.9493);transform-origin:right">BioCyc</div></div>
<div class="a cell r" style="left:1732px;top:904px;width:159px;height:20px"><div style="transform:scaleX(0.9767);transform-origin:right">0.22</div></div>
<div class="a" style="left:0;top:865px;width:218px;height:99px;overflow:hidden"><svg width="218" height="99" style="position:absolute;left:0;top:0" font-family="Liberation Sans, sans-serif"><line x1="108.50" y1="44.90" x2="122.40" y2="52.30" stroke="#1c1c1c" stroke-width="1.0"/><line x1="122.40" y1="52.30" x2="122.40" y2="67.60" stroke="#1c1c1c" stroke-width="1.0"/><line x1="122.40" y1="67.60" x2="108.50" y2="75.00" stroke="#1c1c1c" stroke-width="1.0"/><line x1="108.50" y1="75.00" x2="95.10" y2="67.60" stroke="#1c1c1c" stroke-width="1.0"/><line x1="95.10" y1="67.60" x2="95.10" y2="52.30" stroke="#1c1c1c" stroke-width="1.0"/><line x1="95.10" y1="52.30" x2="108.50" y2="44.90" stroke="#1c1c1c" stroke-width="1.0"/><line x1="108.50" y1="44.90" x2="108.50" y2="39.60" stroke="#1c1c1c" stroke-width="1.0"/><line x1="108.50" y1="39.60" x2="108.50" y2="34.30" stroke="#f21414" stroke-width="1.0"/><line x1="112.70" y1="27.30" x2="115.95" y2="25.45" stroke="#f21414" stroke-width="1.0"/><line x1="115.95" y1="25.45" x2="119.20" y2="23.60" stroke="#a8781c" stroke-width="1.0"/><line x1="119.60" y1="18.10" x2="118.25" y2="15.55" stroke="#a8781c" stroke-width="1.0"/><line x1="118.25" y1="15.55" x2="116.90" y2="13.00" stroke="#f21414" stroke-width="1.0"/><line x1="125.20" y1="19.90" x2="128.45" y2="18.05" stroke="#a8781c" stroke-width="1.0"/><line x1="128.45" y1="18.05" x2="131.70" y2="16.20" stroke="#f21414" stroke-width="1.0"/><line x1="122.14" y1="25.71" x2="124.04" y2="28.91" stroke="#a8781c" stroke-width="1.0"/><line x1="124.04" y1="28.91" x2="125.94" y2="32.11" stroke="#f21414" stroke-width="1.0"/><line x1="123.86" y1="24.69" x2="125.76" y2="27.89" stroke="#a8781c" stroke-width="1.0"/><line x1="125.76" y1="27.89" x2="127.66" y2="31.09" stroke="#f21414" stroke-width="1.0"/><line x1="122.40" y1="52.30" x2="127.05" y2="49.55" stroke="#1c1c1c" stroke-width="1.0"/><line x1="127.05" y1="49.55" x2="131.70" y2="46.80" stroke="#f21414" stroke-width="1.0"/><line x1="122.40" y1="67.60" x2="126.80" y2="70.35" stroke="#1c1c1c" stroke-width="1.0"/><line x1="126.80" y1="70.35" x2="131.20" y2="73.10" stroke="#f21414" stroke-width="1.0"/><line x1="108.50" y1="75.00" x2="108.50" y2="80.30" stroke="#1c1c1c" stroke-width="1.0"/><line x1="108.50" y1="80.30" x2="108.50" y2="85.60" stroke="#f21414" stroke-width="1.0"/><line x1="95.10" y1="67.60" x2="90.95" y2="69.90" stroke="#1c1c1c" stroke-width="1.0"/><line x1="90.95" y1="69.90" x2="86.80" y2="72.20" stroke="#f21414" stroke-width="1.0"/><line x1="95.10" y1="52.30" x2="90.95" y2="49.75" stroke="#1c1c1c" stroke-width="1.0"/><line x1="90.95" y1="49.75" x2="86.80" y2="47.20" stroke="#f21414" stroke-width="1.0"/><text x="108.00" y="31.20" font-size="5.6" fill="#f21414" stroke="#f21414" stroke-width="0.12" text-anchor="middle" font-weight="bold">O</text><text x="121.50" y="23.80" font-size="5.6" fill="#a8781c" stroke="#a8781c" stroke-width="0.12" text-anchor="middle" font-weight="bold">P</text><text x="113.60" y="10.30" font-size="5.6" fill="#f21414" stroke="#f21414" stroke-width="0.12" text-anchor="middle" font-weight="bold">HO</text><text x="137.20" y="16.40" font-size="5.6" fill="#f21414" stroke="#f21414" stroke-width="0.12" text-anchor="middle" font-weight="bold">OH</text><text x="129.40" y="37.20" font-size="5.6" fill="#f21414" stroke="#f21414" stroke-width="0.12" text-anchor="middle" font-weight="bold">O</text><text x="137.20" y="47.40" font-size="5.6" fill="#f21414" stroke="#f21414" stroke-width="0.12" text-anchor="middle" font-weight="bold">OH</text><text x="137.20" y="77.00" font-size="5.6" fill="#f21414" stroke="#f21414" stroke-width="0.12" text-anchor="middle" font-weight="bold">OH</text><text x="110.40" y="93.20" font-size="5.6" fill="#f21414" stroke="#f21414" stroke-width="0.12" text-anchor="middle" font-weight="bold">OH</text><text x="80.70" y="77.00" font-size="5.6" fill="#f21414" stroke="#f21414" stroke-width="0.12" text-anchor="middle" font-weight="bold">HO</text><text x="80.70" y="47.40" font-size="5.6" fill="#f21414" stroke="#f21414" stroke-width="0.12" text-anchor="middle" font-weight="bold">HO</text></svg></div>
<div class="a cell r" style="left:219px;top:1004px;width:159px;height:20px"><div style="transform:scaleX(0.9526);transform-origin:right">1,009</div></div>
<div class="a cell r" style="left:388px;top:1004px;width:157px;height:20px"><div style="transform:scaleX(0.9798);transform-origin:right">473.45</div></div>
<div class="a cell r" style="left:555px;top:1004px;width:159px;height:20px"><div style="transform:scaleX(0.9527);transform-origin:right">C20H23N7O7</div></div>
<div class="a cell" style="left:734px;top:964px;width:157px;height:100px"><div style="transform:scaleX(0.9488);transform-origin:left">2-[4-[(2-amino-4-hydroxy-</div><div style="transform:scaleX(0.9560);transform-origin:left">5,6,7,8-tetrahydropteridin-6-</div><div style="transform:scaleX(0.9856);transform-origin:left">yl)methyl-formyl-</div><div style="transform:scaleX(0.9896);transform-origin:left">amino]benzoyl]aminoglutaric</div><div style="transform:scaleX(0.9963);transform-origin:left">acid</div></div>
<div class="a cell r" style="left:892px;top:1004px;width:158px;height:20px"><div style="transform:scaleX(0.9853);transform-origin:right">7</div></div>
<div class="a cell r" style="left:1060px;top:1004px;width:158px;height:20px"><div style="transform:scaleX(0.9853);transform-origin:right">12</div></div>
<div class="a cell r" style="left:1228px;top:1004px;width:157px;height:20px"><div style="transform:scaleX(0.9853);transform-origin:right">9</div></div>
<div class="a cell" style="left:1405px;top:1004px;width:157px;height:20px"><div style="transform:scaleX(0.9156);transform-origin:left">10-FORMYL-THF</div></div>
<div class="a cell r" style="left:1563px;top:1004px;width:159px;height:20px"><div style="transform:scaleX(0.9493);transform-origin:right">BioCyc</div></div>
<div class="a cell r" style="left:1732px;top:1004px;width:159px;height:20px"><div style="transform:scaleX(0.9522);transform-origin:right">-1.04</div></div>
<div class="a" style="left:0;top:965px;width:218px;height:99px;overflow:hidden"><svg width="218" height="99" style="position:absolute;left:0;top:0" font-family="Liberation Sans, sans-serif"><line x1="30.80" y1="52.40" x2="34.30" y2="50.95" stroke="#f21414" stroke-width="1.0"/><line x1="34.30" y1="50.95" x2="37.80" y2="49.50" stroke="#1c1c1c" stroke-width="1.0"/><line x1="36.30" y1="49.50" x2="36.30" y2="44.80" stroke="#1c1c1c" stroke-width="1.0"/><line x1="36.30" y1="44.80" x2="36.30" y2="40.10" stroke="#f21414" stroke-width="1.0"/><line x1="39.20" y1="49.50" x2="39.20" y2="44.80" stroke="#1c1c1c" stroke-width="1.0"/><line x1="39.20" y1="44.80" x2="39.20" y2="40.10" stroke="#f21414" stroke-width="1.0"/><line x1="37.80" y1="49.50" x2="48.60" y2="54.90" stroke="#1c1c1c" stroke-width="1.0"/><line x1="48.60" y1="54.90" x2="52.35" y2="52.95" stroke="#1c1c1c" stroke-width="1.0"/><line x1="52.35" y1="52.95" x2="56.10" y2="51.00" stroke="#3a44b0" stroke-width="1.0"/><line x1="62.50" y1="51.00" x2="66.20" y2="52.95" stroke="#3a44b0" stroke-width="1.0"/><line x1="66.20" y1="52.95" x2="69.90" y2="54.90" stroke="#1c1c1c" stroke-width="1.0"/><line x1="68.40" y1="54.90" x2="68.40" y2="59.10" stroke="#1c1c1c" stroke-width="1.0"/><line x1="68.40" y1="59.10" x2="68.40" y2="63.30" stroke="#f21414" stroke-width="1.0"/><line x1="71.40" y1="54.90" x2="71.40" y2="59.10" stroke="#1c1c1c" stroke-width="1.0"/><line x1="71.40" y1="59.10" x2="71.40" y2="63.30" stroke="#f21414" stroke-width="1.0"/><line x1="69.90" y1="54.90" x2="80.30" y2="49.50" stroke="#1c1c1c" stroke-width="1.0"/><line x1="80.30" y1="49.50" x2="80.30" y2="36.60" stroke="#1c1c1c" stroke-width="1.0"/><line x1="80.30" y1="36.60" x2="91.20" y2="30.70" stroke="#1c1c1c" stroke-width="1.0"/><line x1="91.20" y1="30.70" x2="102.10" y2="36.60" stroke="#1c1c1c" stroke-width="1.0"/><line x1="102.10" y1="36.60" x2="102.10" y2="49.00" stroke="#1c1c1c" stroke-width="1.0"/><line x1="102.10" y1="49.00" x2="91.20" y2="54.90" stroke="#1c1c1c" stroke-width="1.0"/><line x1="91.20" y1="54.90" x2="80.30" y2="49.50" stroke="#1c1c1c" stroke-width="1.0"/><line x1="82.80" y1="38.60" x2="82.80" y2="47.50" stroke="#1c1c1c" stroke-width="1.0"/><line x1="92.20" y1="34.10" x2="99.60" y2="38.10" stroke="#1c1c1c" stroke-width="1.0"/><line x1="99.60" y1="47.50" x2="91.70" y2="52.00" stroke="#1c1c1c" stroke-width="1.0"/><line x1="102.10" y1="36.60" x2="105.55" y2="34.65" stroke="#1c1c1c" stroke-width="1.0"/><line x1="105.55" y1="34.65" x2="109.00" y2="32.70" stroke="#3a44b0" stroke-width="1.0"/><line x1="112.50" y1="26.70" x2="112.50" y2="22.25" stroke="#3a44b0" stroke-width="1.0"/><line x1="112.50" y1="22.25" x2="112.50" y2="17.80" stroke="#1c1c1c" stroke-width="1.0"/><line x1="112.98" y1="18.68" x2="117.23" y2="16.38" stroke="#1c1c1c" stroke-width="1.0"/><line x1="117.23" y1="16.38" x2="121.48" y2="14.08" stroke="#f21414" stroke-width="1.0"/><line x1="112.02" y1="16.92" x2="116.27" y2="14.62" stroke="#1c1c1c" stroke-width="1.0"/><line x1="116.27" y1="14.62" x2="120.52" y2="12.32" stroke="#f21414" stroke-width="1.0"/><line x1="115.40" y1="33.20" x2="119.40" y2="34.90" stroke="#3a44b0" stroke-width="1.0"/><line x1="119.40" y1="34.90" x2="123.40" y2="36.60" stroke="#1c1c1c" stroke-width="1.0"/><line x1="123.40" y1="36.60" x2="134.20" y2="30.70" stroke="#1c1c1c" stroke-width="1.0"/><line x1="134.20" y1="30.70" x2="134.20" y2="17.80" stroke="#1c1c1c" stroke-width="1.0"/><line x1="134.20" y1="17.80" x2="137.95" y2="15.60" stroke="#1c1c1c" stroke-width="1.0"/><line x1="137.95" y1="15.60" x2="141.70" y2="13.40" stroke="#3a44b0" stroke-width="1.0"/><line x1="149.10" y1="13.40" x2="152.55" y2="15.60" stroke="#3a44b0" stroke-width="1.0"/><line x1="152.55" y1="15.60" x2="156.00" y2="17.80" stroke="#1c1c1c" stroke-width="1.0"/><line x1="156.00" y1="17.80" x2="159.70" y2="15.60" stroke="#1c1c1c" stroke-width="1.0"/><line x1="159.70" y1="15.60" x2="163.40" y2="13.40" stroke="#3a44b0" stroke-width="1.0"/><line x1="168.96" y1="14.19" x2="172.91" y2="16.39" stroke="#3a44b0" stroke-width="1.0"/><line x1="172.91" y1="16.39" x2="176.86" y2="18.59" stroke="#1c1c1c" stroke-width="1.0"/><line x1="169.84" y1="12.61" x2="173.79" y2="14.81" stroke="#3a44b0" stroke-width="1.0"/><line x1="173.79" y1="14.81" x2="177.74" y2="17.01" stroke="#1c1c1c" stroke-width="1.0"/><line x1="177.30" y1="17.80" x2="181.25" y2="15.60" stroke="#1c1c1c" stroke-width="1.0"/><line x1="181.25" y1="15.60" x2="185.20" y2="13.40" stroke="#3a44b0" stroke-width="1.0"/><line x1="176.40" y1="17.80" x2="176.40" y2="22.00" stroke="#1c1c1c" stroke-width="1.0"/><line x1="176.40" y1="22.00" x2="176.40" y2="26.20" stroke="#3a44b0" stroke-width="1.0"/><line x1="178.20" y1="17.80" x2="178.20" y2="22.00" stroke="#1c1c1c" stroke-width="1.0"/><line x1="178.20" y1="22.00" x2="178.20" y2="26.20" stroke="#3a44b0" stroke-width="1.0"/><line x1="173.86" y1="31.91" x2="169.91" y2="34.11" stroke="#3a44b0" stroke-width="1.0"/><line x1="169.91" y1="34.11" x2="165.96" y2="36.31" stroke="#1c1c1c" stroke-width="1.0"/><line x1="174.74" y1="33.49" x2="170.79" y2="35.69" stroke="#3a44b0" stroke-width="1.0"/><line x1="170.79" y1="35.69" x2="166.84" y2="37.89" stroke="#1c1c1c" stroke-width="1.0"/><line x1="166.40" y1="37.10" x2="166.40" y2="41.30" stroke="#1c1c1c" stroke-width="1.0"/><line x1="166.40" y1="41.30" x2="166.40" y2="45.50" stroke="#f21414" stroke-width="1.0"/><line x1="166.40" y1="37.10" x2="156.00" y2="30.70" stroke="#1c1c1c" stroke-width="1.0"/><line x1="156.00" y1="30.70" x2="156.00" y2="17.80" stroke="#1c1c1c" stroke-width="1.0"/><line x1="158.00" y1="29.00" x2="158.00" y2="19.50" stroke="#1c1c1c" stroke-width="1.0"/><line x1="156.00" y1="30.70" x2="152.05" y2="32.90" stroke="#1c1c1c" stroke-width="1.0"/><line x1="152.05" y1="32.90" x2="148.10" y2="35.10" stroke="#3a44b0" stroke-width="1.0"/><line x1="142.70" y1="34.60" x2="138.45" y2="32.65" stroke="#3a44b0" stroke-width="1.0"/><line x1="138.45" y1="32.65" x2="134.20" y2="30.70" stroke="#1c1c1c" stroke-width="1.0"/><line x1="48.60" y1="54.90" x2="48.60" y2="67.80" stroke="#1c1c1c" stroke-width="1.0"/><line x1="48.60" y1="67.80" x2="37.80" y2="73.70" stroke="#1c1c1c" stroke-width="1.0"/><line x1="37.80" y1="73.70" x2="37.80" y2="86.60" stroke="#1c1c1c" stroke-width="1.0"/><line x1="31.30" y1="89.60" x2="34.55" y2="88.10" stroke="#f21414" stroke-width="1.0"/><line x1="34.55" y1="88.10" x2="37.80" y2="86.60" stroke="#1c1c1c" stroke-width="1.0"/><line x1="37.31" y1="87.47" x2="40.76" y2="89.42" stroke="#1c1c1c" stroke-width="1.0"/><line x1="40.76" y1="89.42" x2="44.21" y2="91.37" stroke="#f21414" stroke-width="1.0"/><line x1="38.29" y1="85.73" x2="41.74" y2="87.68" stroke="#1c1c1c" stroke-width="1.0"/><line x1="41.74" y1="87.68" x2="45.19" y2="89.63" stroke="#f21414" stroke-width="1.0"/><text x="25.90" y="56.40" font-size="5.0" fill="#f21414" stroke="#f21414" stroke-width="0.12" text-anchor="middle" font-weight="bold">HO</text><text x="37.60" y="38.40" font-size="5.0" fill="#f21414" stroke="#f21414" stroke-width="0.12" text-anchor="middle" font-weight="bold">O</text><text x="59.50" y="50.30" font-size="5.0" fill="#3a44b0" stroke="#3a44b0" stroke-width="0.20" text-anchor="middle">N</text><text x="59.50" y="45.30" font-size="5.0" fill="#3a44b0" stroke="#3a44b0" stroke-width="0.20" text-anchor="middle">H</text><text x="69.40" y="69.60" font-size="5.0" fill="#f21414" stroke="#f21414" stroke-width="0.12" text-anchor="middle" font-weight="bold">O</text><text x="112.50" y="32.50" font-size="5.0" fill="#3a44b0" stroke="#3a44b0" stroke-width="0.20" text-anchor="middle">N</text><text x="123.40" y="13.20" font-size="5.0" fill="#f21414" stroke="#f21414" stroke-width="0.12" text-anchor="middle" font-weight="bold">O</text><text x="145.60" y="13.70" font-size="5.0" fill="#3a44b0" stroke="#3a44b0" stroke-width="0.20" text-anchor="middle">N</text><text x="145.60" y="8.20" font-size="5.0" fill="#3a44b0" stroke="#3a44b0" stroke-width="0.20" text-anchor="middle">H</text><text x="166.40" y="13.70" font-size="5.0" fill="#3a44b0" stroke="#3a44b0" stroke-width="0.20" text-anchor="middle">N</text><text x="189.00" y="13.70" font-size="5.0" fill="#3a44b0" stroke="#3a44b0" stroke-width="0.20" text-anchor="middle">NH</text><text x="194.50" y="14.80" font-size="3.5" fill="#3a44b0" stroke="#3a44b0" stroke-width="0.20" text-anchor="middle">2</text><text x="178.30" y="32.50" font-size="5.0" fill="#3a44b0" stroke="#3a44b0" stroke-width="0.20" text-anchor="middle">N</text><text x="167.90" y="51.30" font-size="5.0" fill="#f21414" stroke="#f21414" stroke-width="0.12" text-anchor="middle" font-weight="bold">OH</text><text x="145.60" y="38.40" font-size="5.0" fill="#3a44b0" stroke="#3a44b0" stroke-width="0.20" text-anchor="middle">N</text><text x="145.60" y="43.40" font-size="5.0" fill="#3a44b0" stroke="#3a44b0" stroke-width="0.20" text-anchor="middle">H</text><text x="25.90" y="94.30" font-size="5.0" fill="#f21414" stroke="#f21414" stroke-width="0.12" text-anchor="middle" font-weight="bold">HO</text><text x="48.60" y="94.30" font-size="5.0" fill="#f21414" stroke="#f21414" stroke-width="0.12" text-anchor="middle" font-weight="bold">O</text></svg></div>
<div class="a" style="left:1901px;top:165px;width:18px;height:912px;background:#f1f1f1"></div>
<svg class="a" style="left:1905px;top:170px" width="9" height="6"><path d="M0.5 5h8L4.5 1z" fill="#a3a3a3"/></svg>
<div class="a" style="left:1903px;top:181px;width:13px;height:17px;background:#c1c1c1"></div>
<svg class="a" style="left:1905px;top:1065px" width="9" height="6"><path d="M0.5 1h8L4.5 5z" fill="#505050"/></svg>
<div class="a" style="left:0;top:1077px;width:1920px;height:1px;background:#a9a9a9"></div>
<div class="a" style="left:0;top:1078px;width:1920px;height:2px;background:#cfcfcf"></div>
<div class="a" style="left:1919px;top:0;width:1px;height:1080px;background:#b8b8b8"></div>
<div class="a" style="left:1919px;top:2px;width:1px;height:48px;background:#c7823a"></div>
<div class="a" style="left:0;top:79px;width:1px;height:998px;background:#dcdcdc"></div>
<svg class="a" style="left:550px;top:557px" width="20" height="26"><path d="M3.5 3.5V19.5L7.3 15.8L10 21.3L12.3 20.3L9.8 15H14.8Z" fill="#fff" stroke="#000" stroke-width="1.1" stroke-linejoin="round"/></svg>
</body></html>
